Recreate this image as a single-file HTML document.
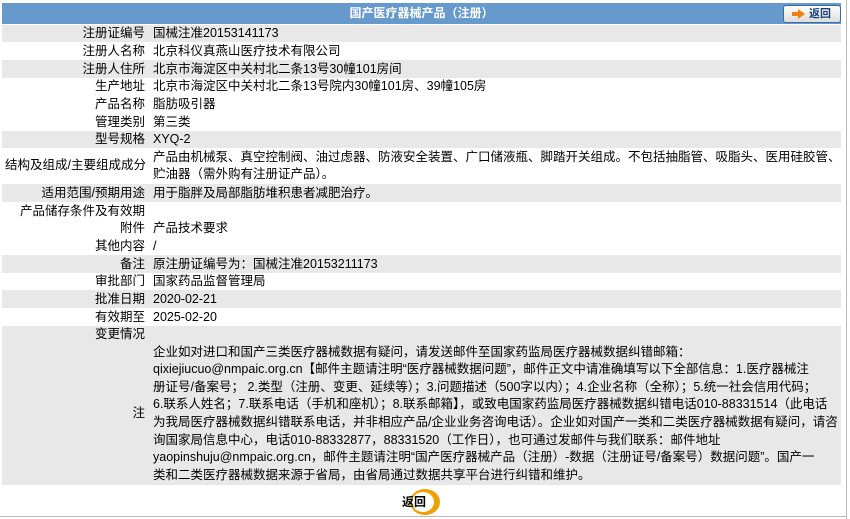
<!DOCTYPE html>
<html><head><meta charset="utf-8"><style>
body{margin:0;width:850px;height:519px;background:#fff;font-family:"Liberation Sans","Noto Sans CJK SC",sans-serif;font-size:12.5px;color:#000;position:relative;overflow:hidden}
.hd{position:absolute;left:2px;top:3px;width:839px;height:21px;background:#6699cc;color:#fff;font-weight:bold;text-align:center;line-height:21px;font-size:12px}
.btn{position:absolute;left:783px;top:5px;width:56px;height:16px;border:1px solid #3a6aa8;border-radius:3px;background:linear-gradient(#fff,#ddd);color:#1a3f7a;font-weight:bold;line-height:16px;font-size:11px}
.btn i{position:absolute;left:14px;top:3px;width:0;height:0;border-left:7px solid #f08010;border-top:5px solid transparent;border-bottom:5px solid transparent}
.btn i:before{content:"";position:absolute;left:-13px;top:-2px;width:6px;height:4px;background:#f08010}
.btn span{position:absolute;left:25px}
.r{position:absolute;left:2px;width:839px;display:flex;overflow:hidden}
.g{background:#e8e8e8}
.l{width:150px;text-align:right;padding-right:7px;box-sizing:border-box;flex:none;white-space:nowrap}
.v{padding-left:1px;flex:1;white-space:nowrap}
.vline{position:absolute;left:846px;top:0;width:1px;height:519px;background:#bbb}
.bline{position:absolute;left:0;top:516px;width:846px;height:1px;background:#bbb}
</style></head><body>
<div class="hd">国产医疗器械产品（注册）</div>
<div class="btn"><i></i><span>返回</span></div>
<div class="r g" style="top:25px;height:17px;line-height:17px"><div class="l">注册证编号</div><div class="v">国械注准20153141173</div></div>
<div class="r" style="top:42px;height:18px;line-height:18px"><div class="l">注册人名称</div><div class="v">北京科仪真燕山医疗技术有限公司</div></div>
<div class="r g" style="top:60px;height:18px;line-height:18px"><div class="l">注册人住所</div><div class="v">北京市海淀区中关村北二条13号30幢101房间</div></div>
<div class="r" style="top:78px;height:17px;line-height:17px"><div class="l">生产地址</div><div class="v">北京市海淀区中关村北二条13号院内30幢101房、39幢105房</div></div>
<div class="r" style="top:95px;height:18px;line-height:18px"><div class="l">产品名称</div><div class="v">脂肪吸引器</div></div>
<div class="r" style="top:113px;height:18px;line-height:18px"><div class="l">管理类别</div><div class="v">第三类</div></div>
<div class="r g" style="top:131px;height:17px;line-height:17px"><div class="l">型号规格</div><div class="v">XYQ-2</div></div>
<div class="r" style="top:148px;height:36px;line-height:17.5px;align-items:center"><div class="l" style="padding-right:6px">结构及组成/主要组成成分</div><div class="v">产品由机械泵、真空控制阀、油过虑器、防液安全装置、广口储液瓶、脚踏开关组成。不包括抽脂管、吸脂头、医用硅胶管、<br>贮油器（需外购有注册证产品）。</div></div>
<div class="r g" style="top:184px;height:18px;line-height:18px"><div class="l">适用范围/预期用途</div><div class="v">用于脂胖及局部脂肪堆积患者减肥治疗。</div></div>
<div class="r" style="top:202px;height:18px;line-height:18px"><div class="l">产品储存条件及有效期</div><div class="v"></div></div>
<div class="r" style="top:220px;height:17px;line-height:17px"><div class="l">附件</div><div class="v">产品技术要求</div></div>
<div class="r" style="top:237px;height:18px;line-height:18px"><div class="l">其他内容</div><div class="v">/</div></div>
<div class="r g" style="top:255px;height:18px;line-height:18px"><div class="l">备注</div><div class="v">原注册证编号为：国械注准20153211173</div></div>
<div class="r" style="top:273px;height:17px;line-height:17px"><div class="l">审批部门</div><div class="v">国家药品监督管理局</div></div>
<div class="r g" style="top:290px;height:18px;line-height:18px"><div class="l">批准日期</div><div class="v">2020-02-21</div></div>
<div class="r" style="top:308px;height:18px;line-height:18px"><div class="l">有效期至</div><div class="v">2025-02-20</div></div>
<div class="r g" style="top:326px;height:17px;line-height:17px"><div class="l">变更情况</div><div class="v"></div></div>
<div class="r g" style="top:343px;height:142px;line-height:17.6px;align-items:center"><div class="l">注</div><div class="v">企业如对进口和国产三类医疗器械数据有疑问，请发送邮件至国家药监局医疗器械数据纠错邮箱：<br>qixiejiucuo@nmpaic.org.cn【邮件主题请注明“医疗器械数据问题”，邮件正文中请准确填写以下全部信息：1.医疗器械注<br>册证号/备案号； 2.类型（注册、变更、延续等）；3.问题描述（500字以内）；4.企业名称（全称）；5.统一社会信用代码；<br>6.联系人姓名；7.联系电话（手机和座机）；8.联系邮箱】，或致电国家药监局医疗器械数据纠错电话010-88331514（此电话<br>为我局医疗器械数据纠错联系电话，并非相应产品/企业业务咨询电话）。企业如对国产一类和二类医疗器械数据有疑问，请咨<br>询国家局信息中心，电话010-88332877，88331520（工作日），也可通过发邮件与我们联系：邮件地址<br>yaopinshuju@nmpaic.org.cn，邮件主题请注明“国产医疗器械产品（注册）-数据（注册证号/备案号）数据问题”。国产一<br>类和二类医疗器械数据来源于省局，由省局通过数据共享平台进行纠错和维护。</div></div>
<div style="position:absolute;left:410px;top:489px;width:30px;height:26px;border-radius:50%;background:#f0a000"></div>
<div style="position:absolute;left:412px;top:492px;width:22px;height:20px;border-radius:50%;background:#fff"></div>
<div style="position:absolute;left:402px;top:493px;font-weight:bold;font-size:12px">返回</div>
<div class="vline"></div><div class="bline"></div>
</body></html>
